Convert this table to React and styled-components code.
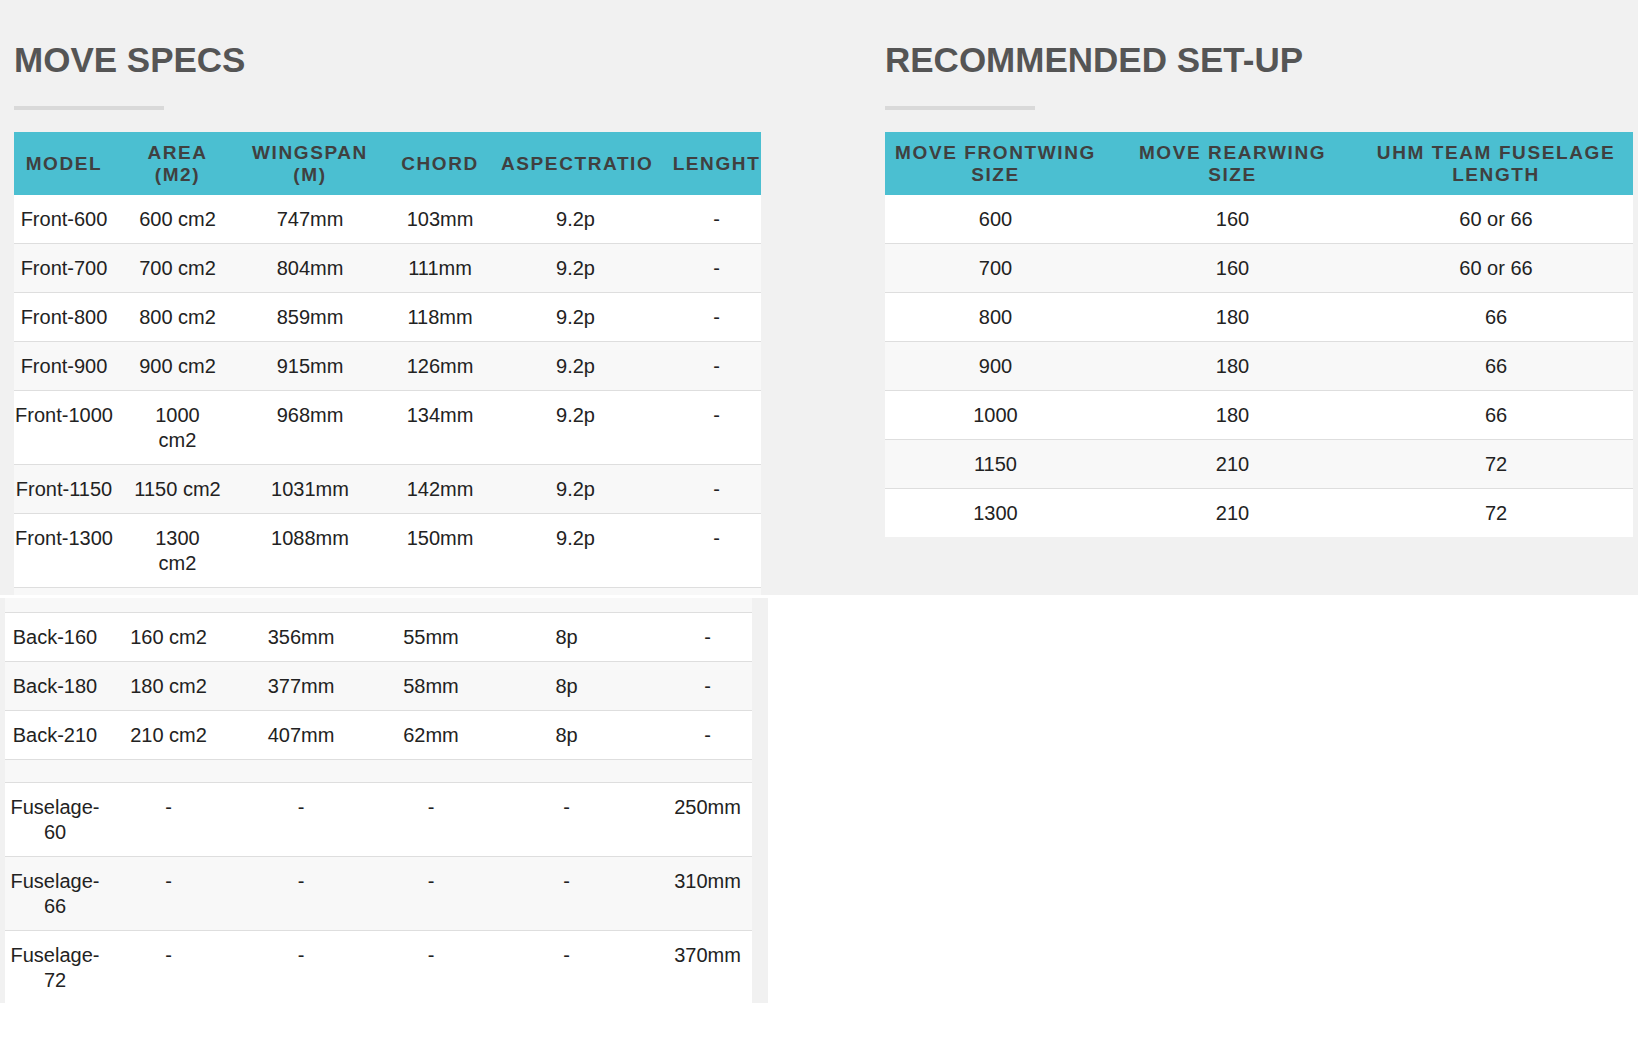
import React from 'react';
import styled, { createGlobalStyle } from 'styled-components';

const GlobalStyle = createGlobalStyle`
body {
    margin: 0;
    background: #fff;
    font-family: 'Liberation Sans', Arial, sans-serif;
}
`

const Section = styled.section`
background-color: #f1f1f1;
padding: 40px 0 0 14px;
display: grid;
grid-template-columns: 747px 748px;
column-gap: 124px;
align-items: start;
`

const Column = styled.div`
display: flex;
flex-direction: column;
`

const Title = styled.h2`
margin: 0;
font-size: 35px;
line-height: 40px;
font-weight: bold;
color: #555;
`

const Divider = styled.div`
width: 150px;
height: 4px;
background-color: #d9d9d9;
margin: 26px 0 22px 0;
`

const Clip = styled.div`
width: 747px;
overflow: hidden;
`

const Table = styled.table`
width: ${p => p.$width}px;
table-layout: fixed;
border-collapse: collapse;
border-spacing: 0;
`

const Head = styled.th`
background-color: #4bbfd1;
color: #404040;
font-size: 19px;
font-weight: bold;
letter-spacing: 1.6px;
line-height: 21.6px;
padding: 10px 0;
text-align: center;
vertical-align: middle;
`

const Row = styled.tr`
background-color: ${p => p.$shade ? '#f8f8f8' : '#fff'};
border-bottom: ${p => p.$open ? 'none' : '1px solid #dedede'};
`

const Cell = styled.td`
font-size: 20px;
line-height: 25px;
color: #222;
text-align: center;
vertical-align: top;
padding: 12px 0 11px 0;
`

const Blank = styled.td`
padding: 0;
height: ${p => p.$h}px;
`

const Lower = styled.div`
margin-top: 3px;
width: 747px;
height: 405px;
padding: 0 16px 0 5px;
background-color: #f1f1f1;
overflow: hidden;
`

const specCols = [100, 127, 138, 122, 149, 133];
const setupCols = [221, 253, 274];

const front = [
    ['Front-600', '600 cm2', '747mm', '103mm', '9.2p', '-'],
    ['Front-700', '700 cm2', '804mm', '111mm', '9.2p', '-'],
    ['Front-800', '800 cm2', '859mm', '118mm', '9.2p', '-'],
    ['Front-900', '900 cm2', '915mm', '126mm', '9.2p', '-'],
    ['Front-1000', ['1000', 'cm2'], '968mm', '134mm', '9.2p', '-'],
    ['Front-1150', '1150 cm2', '1031mm', '142mm', '9.2p', '-'],
    ['Front-1300', ['1300', 'cm2'], '1088mm', '150mm', '9.2p', '-'],
];

const back = [
    ['Back-160', '160 cm2', '356mm', '55mm', '8p', '-'],
    ['Back-180', '180 cm2', '377mm', '58mm', '8p', '-'],
    ['Back-210', '210 cm2', '407mm', '62mm', '8p', '-'],
];

const fuselage = [
    [['Fuselage-', '60'], '-', '-', '-', '-', '250mm'],
    [['Fuselage-', '66'], '-', '-', '-', '-', '310mm'],
    [['Fuselage-', '72'], '-', '-', '-', '-', '370mm'],
];

const setup = [
    ['600', '160', '60 or 66'],
    ['700', '160', '60 or 66'],
    ['800', '180', '66'],
    ['900', '180', '66'],
    ['1000', '180', '66'],
    ['1150', '210', '72'],
    ['1300', '210', '72'],
];

function Lines({ value }) {
    if (Array.isArray(value)) {
        return value.map((v, i) => <React.Fragment key={i}>{i > 0 && <br />}{v}</React.Fragment>);
    }
    return value;
}

function Cols({ widths }) {
    return (
        <colgroup>
            {widths.map((w, i) => <col key={i} style={{ width: w }} />)}
        </colgroup>
    );
}

function DataRow({ cells, shade, open }) {
    return (
        <Row $shade={shade} $open={open}>
            {cells.map((c, i) => <Cell key={i}><Lines value={c} /></Cell>)}
        </Row>
    );
}

function BlankRow({ h, shade, open, span }) {
    return (
        <Row $shade={shade} $open={open}>
            <Blank colSpan={span} $h={h} />
        </Row>
    );
}

export default function App() {
    const lower = [...back.map(r => ({ r })), { blank: true }, ...fuselage.map(r => ({ r }))];
    return (
        <>
            <GlobalStyle />
            <Section>
                <Column>
                    <Title>MOVE SPECS</Title>
                    <Divider />
                    <Clip>
                        <Table $width={769}>
                            <Cols widths={specCols} />
                            <thead>
                                <tr>
                                    <Head>MODEL</Head>
                                    <Head>AREA<br />(M2)</Head>
                                    <Head>WINGSPAN<br />(M)</Head>
                                    <Head>CHORD</Head>
                                    <Head>ASPECTRATIO</Head>
                                    <Head>LENGHT</Head>
                                </tr>
                            </thead>
                            <tbody>
                                {front.map((r, i) => <DataRow key={i} cells={r} shade={i % 2 === 1} />)}
                                <BlankRow h={7} shade open span={6} />
                            </tbody>
                        </Table>
                    </Clip>
                </Column>
                <Column>
                    <Title>RECOMMENDED SET-UP</Title>
                    <Divider />
                    <Table $width={748}>
                        <Cols widths={setupCols} />
                        <thead>
                            <tr>
                                <Head>MOVE FRONTWING<br />SIZE</Head>
                                <Head>MOVE REARWING<br />SIZE</Head>
                                <Head>UHM TEAM FUSELAGE<br />LENGTH</Head>
                            </tr>
                        </thead>
                        <tbody>
                            {setup.map((r, i) => (
                                <DataRow key={i} cells={r} shade={i % 2 === 1} open={i === setup.length - 1} />
                            ))}
                        </tbody>
                    </Table>
                </Column>
            </Section>
            <Lower>
                <Clip>
                    <Table $width={769}>
                        <Cols widths={specCols} />
                        <tbody>
                            <BlankRow h={14} shade span={6} />
                            {lower.map((item, i) => item.blank
                                ? <BlankRow key={i} h={22} shade={i % 2 === 1} span={6} />
                                : <DataRow key={i} cells={item.r} shade={i % 2 === 1} />
                            )}
                        </tbody>
                    </Table>
                </Clip>
            </Lower>
        </>
    );
}
